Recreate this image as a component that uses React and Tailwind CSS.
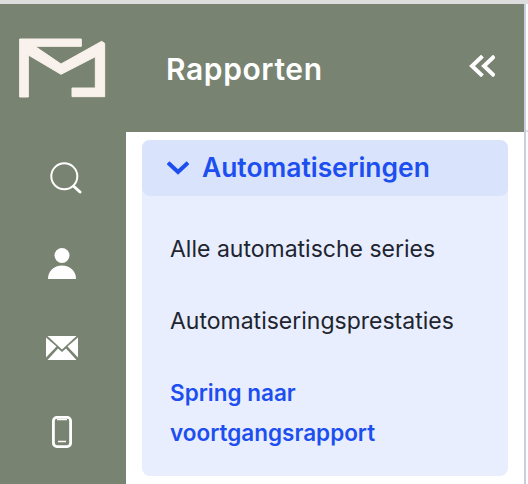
function Logo() {
  return (
    <svg width="87" height="60" viewBox="57 114 261 180" fill="#f9f1ec" stroke="#f9f1ec" strokeWidth="3" strokeLinejoin="round">
      <path d="M59 117L244 117V139L105 139L183 192L305 124L314 130V290H216V264H286V170L183 223L85 165V291H59Z" />
    </svg>
  );
}

function Search() {
  return (
    <svg width="32" height="32" viewBox="0 0 32 32" fill="none" stroke="white" strokeLinecap="round">
      <circle cx="14.3" cy="14.3" r="13" strokeWidth="2" />
      <path d="M24 24.5L30 30" strokeWidth="3" />
    </svg>
  );
}

function Person() {
  return (
    <svg width="28" height="31" viewBox="0 0 28 31" fill="white">
      <circle cx="14" cy="7.5" r="7.5" />
      <path d="M0 31C0 23 6 17.5 14 17.5S28 23 28 31Z" />
    </svg>
  );
}

function Mail() {
  return (
    <svg width="32" height="24" viewBox="0 0 32 24" fill="white">
      <path d="M1.5 0H30.5L16 13.5Z" />
      <path d="M0 1.5V21.5L10.5 10.5Z" />
      <path d="M32 1.5V21.5L21.5 10.5Z" />
      <path d="M1.5 24H30.5L20 12.5L16 16L12 12.5Z" />
    </svg>
  );
}

function Phone() {
  return (
    <svg width="20" height="32" viewBox="0 0 20 32" fill="none" stroke="white">
      <rect x="1.4" y="1.4" width="17.2" height="29.2" rx="3.5" strokeWidth="2.8" />
      <path d="M6 25.5H14" strokeWidth="1.5" />
      <path d="M5 3.5H15" strokeWidth="1.5" />
    </svg>
  );
}

function DoubleChevron() {
  return (
    <svg width="26" height="22" viewBox="0 0 26 22" fill="none" stroke="white" strokeWidth="4" strokeLinecap="square">
      <path d="M12 2.5L3 11L12 19.5" />
      <path d="M24 2.5L15 11L24 19.5" />
    </svg>
  );
}

function Chevron() {
  return (
    <svg width="22" height="14" viewBox="0 0 22 14" fill="none" stroke="#1d4ff0" strokeWidth="4" strokeLinecap="square">
      <path d="M2.5 3L11 11L19.5 3" />
    </svg>
  );
}

export default function App() {
  return (
    <div className="w-[528px] h-[484px] overflow-hidden bg-white flex flex-col font-['Inter','Noto_Sans',sans-serif]">
      <div className="h-[4px] bg-[#dddddd] shrink-0" />
      <div className="flex flex-1 min-h-0">
        <div className="flex flex-1 min-w-0">
          <div className="w-[126px] shrink-0 bg-[#798371] flex flex-col items-center pr-[2px]">
            <div className="mt-[34px] h-[60px]"><Logo /></div>
            <div className="mt-[64px] h-[32px] ml-[7px]"><Search /></div>
            <div className="mt-[54px] h-[31px]"><Person /></div>
            <div className="mt-[57px] h-[24px]"><Mail /></div>
            <div className="mt-[56px] h-[32px]"><Phone /></div>
          </div>
          <div className="flex-1 min-w-0 flex flex-col">
            <div className="h-[128px] bg-[#798371] flex items-center justify-between pl-[40px] pr-[29px] shrink-0">
              <div className="text-[30px] font-semibold tracking-[0.6px] text-white mt-[2px]">Rapporten</div>
              <div className="-mt-[5px] h-[22px]"><DoubleChevron /></div>
            </div>
            <div className="pl-[16px] pr-[16px] pt-[8px]">
              <div className="bg-[#e8eefd] rounded-[8px] h-[336px]">
                <div className="h-[56px] bg-[#d9e3fc] rounded-[8px] flex items-center pl-[25px] gap-[13px] text-[#1d4ff0]">
                  <Chevron />
                  <span className="text-[26.4px] font-semibold">Automatiseringen</span>
                </div>
                <div className="pl-[28px] pt-[37px] text-[23px] text-[#1e2430]">
                  <div className="h-[32px] leading-[32px]">Alle automatische series</div>
                  <div className="h-[32px] leading-[32px] mt-[40px]">Automatiseringsprestaties</div>
                  <div className="leading-[40px] mt-[36px] text-[22.5px] font-semibold text-[#1d4ff0]">
                    Spring naar<br />voortgangsrapport
                  </div>
                </div>
              </div>
            </div>
          </div>
        </div>
        <div className="w-[2px] bg-[#c9cede] shrink-0" />
        <div className="w-[2px] shrink-0 flex flex-col">
          <div className="mt-[126px] h-[2px] bg-[#dcdfe8]" />
        </div>
      </div>
    </div>
  );
}
